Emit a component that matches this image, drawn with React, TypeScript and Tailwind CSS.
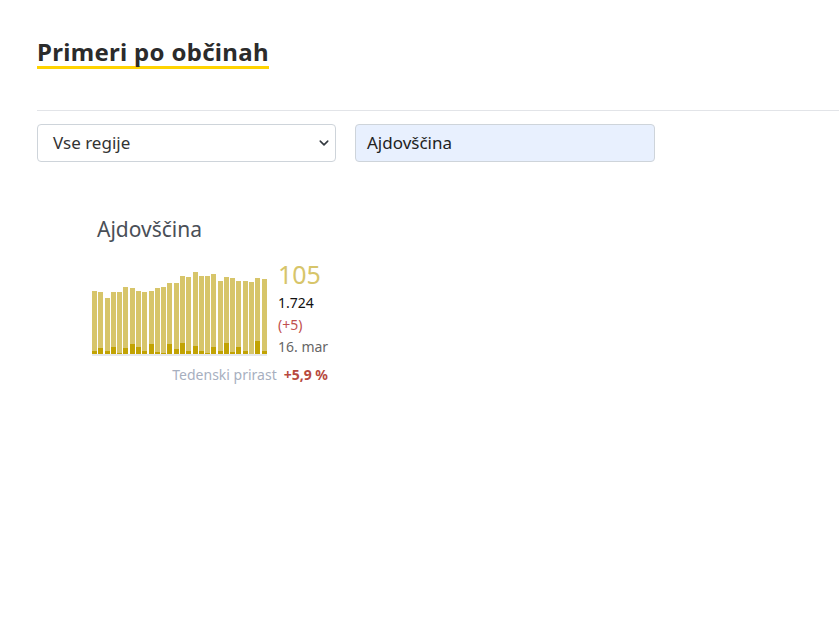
import React from "react";

const bars: [number, number][] = [
  [63, 3], [62, 6], [56, 3], [62, 7], [62, 1], [67, 6], [66, 10], [63, 7], [62, 3], [63, 10],
  [66, 2], [67, 1], [71, 10], [71, 5], [78, 11], [77, 3], [82, 8], [78, 3], [78, 1], [80, 7],
  [73, 3], [77, 11], [76, 2], [73, 7], [73, 3], [72, 0], [76, 13], [75, 3],
];

function Chart() {
  return (
    <div className="flex h-[86px] w-[175px] items-end justify-between border-b-2 border-[#e6e8ec]">
      {bars.map(([total, dark], i) => (
        <div
          key={i}
          className="flex w-[5px] flex-col justify-end bg-[#d7c56a]"
          style={{ height: total }}
        >
          <div className="bg-[#c2a303]" style={{ height: dark }} />
        </div>
      ))}
    </div>
  );
}

export default function App() {
  return (
    <div className="min-h-[630px] w-[839px] bg-white pl-[37px] pt-[37px] font-['Noto_Sans',sans-serif] text-[#222]">
      <h2 className="inline-block border-b-[3px] border-[#ffd300] text-[24px] font-bold leading-[29px] tracking-[0.3px] text-[#2b2b2b]">
        Primeri po občinah
      </h2>
      <div className="mt-[41px] border-t border-[#e2e4e8]" />
      <div className="mt-[13px] flex gap-[19px]">
        <div className="flex h-[38px] w-[299px] items-center justify-between rounded-[4px] border border-[#ced4da] bg-white pl-[15px] pr-[6px] text-[17px] text-[#333]">
          <span>Vse regije</span>
          <svg width="10" height="10" viewBox="0 0 16 16" fill="none" stroke="#343a40" strokeWidth="2.5" strokeLinecap="round" strokeLinejoin="round">
            <path d="M2 5l6 6 6-6" />
          </svg>
        </div>
        <div className="flex h-[38px] w-[300px] items-center rounded-[4px] border border-[#ced4da] bg-[#e8f0fe] px-[11px] text-[17px] text-[#222]">
          Ajdovščina
        </div>
      </div>
      <div className="ml-[55px] mt-[52px] w-[240px]">
        <div className="pl-[5px] text-[21px] leading-[30px] text-[#4a4f57]">Ajdovščina</div>
        <div className="mt-[16px] flex items-end gap-[11px]">
          <Chart />
          <div className="-mb-[2px] flex flex-col">
            <span className="text-[25px] leading-[28px] text-[#d7c56a]">105</span>
            <span className="mt-[4px] text-[14px] leading-[22px] text-[#111]">1.724</span>
            <span className="text-[14px] leading-[22px] text-[#c0504d]">(+5)</span>
            <span className="text-[14px] leading-[22px] text-[#666]">16. mar</span>
          </div>
        </div>
        <div className="mt-[9px] flex justify-end gap-[7px] pr-[4px] text-[14px] leading-[20px]">
          <span className="text-[#a7afbf]">Tedenski prirast</span>
          <span className="font-bold text-[#b84a3e]">+5,9 %</span>
        </div>
      </div>
    </div>
  );
}
